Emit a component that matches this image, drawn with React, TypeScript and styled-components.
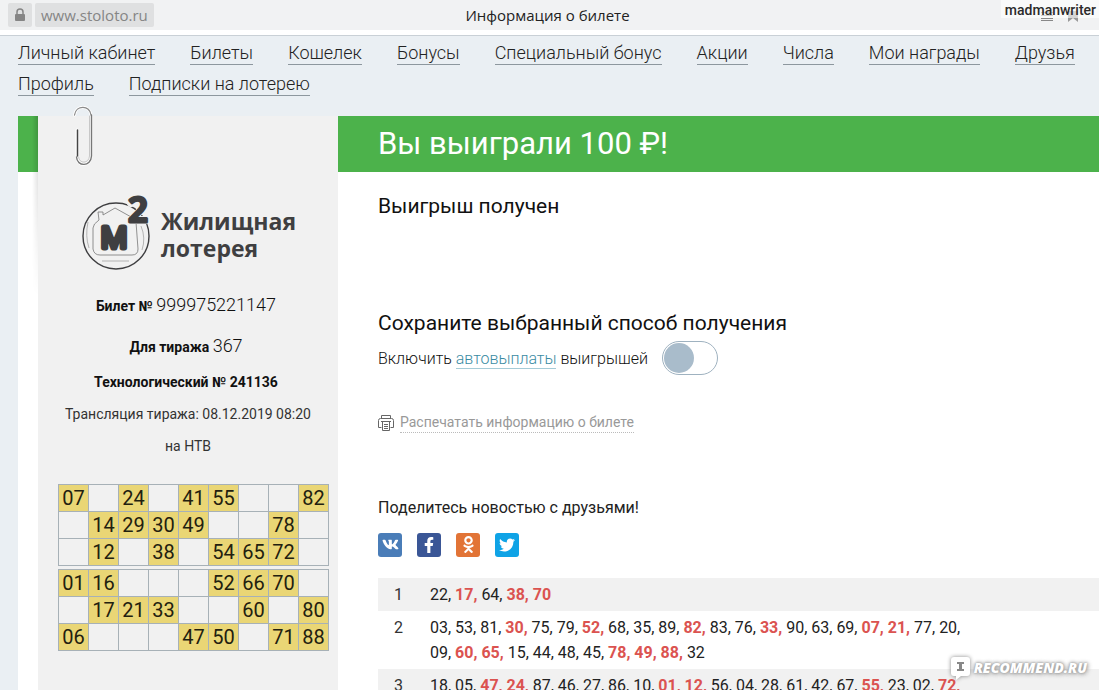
import React from "react";
import styled, { createGlobalStyle } from "styled-components";
import { FaVk, FaFacebookF, FaOdnoklassniki, FaTwitter } from "react-icons/fa";

const GlobalStyle = createGlobalStyle`
  *, *::before, *::after { box-sizing: border-box; }
  body { margin: 0; background: #eaeff3; color: #111; font-family: Roboto, "Liberation Sans", sans-serif; }
  h1, h2, p { margin: 0; }
`;

const Page = styled.div`
  position: relative;
  display: flex;
  flex-direction: column;
  height: 100vh;
  overflow: hidden;
`;

const BrowserBar = styled.header`
  display: grid;
  grid-template-columns: 1fr auto 1fr;
  flex: none;
  height: 36px;
  padding: 3px 12px 0 8px;
  background: linear-gradient(#f1f2f3 30px, #fff 30px);
  border-bottom: 1px solid #c9d0d6;
  font-family: "Open Sans", "Noto Sans", sans-serif;
  font-size: 15px;
  line-height: 24px;
`;

const Address = styled.div`
  display: flex;
  gap: 3px;
  height: 24px;
  color: #858585;
`;

const AddressPart = styled.span`
  display: flex;
  align-items: center;
  height: 24px;
  padding: 0 6px;
  border-radius: 2px;
  background: #dfe0e1;
`;

const PageTitle = styled.div`
  color: #222;
`;

const Nav = styled.nav`
  display: flex;
  flex-wrap: wrap;
  flex: none;
  gap: 7px 35px;
  height: 80px;
  align-content: flex-start;
  padding: 5px 18px 0;
`;

const NavLink = styled.a`
  height: 24px;
  border-bottom: 1px solid #8d979e;
  color: #222;
  font-size: 18px;
  font-weight: 300;
  line-height: 24px;
  text-decoration: none;
`;

const Main = styled.main`
  display: flex;
  flex: 1;
  margin-left: 18px;
  min-height: 0;
  background: linear-gradient(#4cb24b 56px, #fff 56px);
`;

const Fold = styled.div`
  flex: none;
  width: 20px;
  height: 180px;
  background: linear-gradient(to right, transparent 14px, rgba(0, 0, 0, 0.16));
  mask-image: linear-gradient(#000, transparent);
`;

const Ticket = styled.aside`
  position: relative;
  display: flex;
  flex-direction: column;
  align-items: center;
  flex: none;
  width: 300px;
  padding-top: 78px;
  background: #f1f1f1;
`;

const Clip = styled.svg`
  position: absolute;
  top: -10px;
  left: 34px;
`;

const Brand = styled.div`
  display: flex;
  gap: 10px;
  align-self: stretch;
  height: 91px;
  padding-left: 43px;
`;

const BrandName = styled.div`
  padding-top: 14px;
  color: #3f3f41;
  font-family: "Open Sans", "Noto Sans", sans-serif;
  font-size: 23px;
  font-weight: 700;
  line-height: 27px;
`;

const TicketLine = styled.p<{ $strong?: boolean; $height: number }>`
  padding-right: ${(p) => (p.$strong ? 4 : 0)}px;
  font-size: 14px;
  font-weight: ${(p) => (p.$strong ? 700 : 400)};
  line-height: ${(p) => p.$height}px;
  color: ${(p) => (p.$strong ? "#111" : "#333")};
`;

const Figure = styled.span`
  font-size: 18px;
  font-weight: 300;
`;

const Grids = styled.div`
  display: flex;
  flex-direction: column;
  align-self: flex-start;
  gap: 3px;
  margin-top: 22px;
  padding-left: 20px;
`;

const Grid = styled.table`
  border-collapse: collapse;
  table-layout: fixed;
  width: 271px;
`;

const Cell = styled.td<{ $filled: boolean }>`
  height: 27px;
  padding: 0;
  border: 1px solid #a7b1b7;
  background: ${(p) => (p.$filled ? "#ead675" : "transparent")};
  color: #22200f;
  font-size: 20px;
  line-height: 26px;
  text-align: center;
`;

const Content = styled.section`
  flex: 1;
  min-width: 0;
  padding-left: 40px;
`;

const Headline = styled.h1`
  height: 56px;
  color: #fff;
  font-size: 31px;
  font-weight: 400;
  line-height: 55px;
`;

const Subhead = styled.h2<{ $space: number }>`
  margin-top: ${(p) => p.$space}px;
  font-size: 21px;
  font-weight: 400;
  line-height: 28px;
`;

const AutoPay = styled.div`
  display: flex;
  align-items: center;
  gap: 14px;
  height: 34px;
  margin-top: 4px;
  font-size: 16px;
  font-weight: 300;
`;

const TextLink = styled.a`
  border-bottom: 1px solid #a5cbd7;
  color: #3a8ba3;
  text-decoration: none;
`;

const Toggle = styled.input`
  appearance: none;
  width: 56px;
  height: 34px;
  margin: 0;
  padding: 1px;
  border: 1px solid #9fb2c0;
  border-radius: 17px;
  background: #fff;
  &::before {
    content: "";
    display: block;
    width: 30px;
    height: 30px;
    border-radius: 50%;
    background: #a9bccb;
  }
  &:checked::before { margin-left: auto; }
`;

const PrintLink = styled.a`
  display: inline-flex;
  gap: 6px;
  align-items: center;
  margin-top: 37px;
  color: #999;
  font-size: 14px;
  line-height: 20px;
  text-decoration: none;
  span { border-bottom: 1px dotted #bbb; }
`;

const ShareText = styled.p`
  margin-top: 61px;
  font-size: 16px;
  line-height: 24px;
  color: #222;
`;

const Socials = styled.div`
  display: flex;
  gap: 15px;
  margin-top: 13px;
`;

const Social = styled.a<{ $color: string }>`
  display: flex;
  align-items: center;
  justify-content: center;
  width: 24px;
  height: 24px;
  border-radius: 3px;
  background: ${(p) => p.$color};
  color: #fff;
`;

const Draws = styled.table`
  width: 100%;
  margin-top: 21px;
  border-collapse: collapse;
  color: #222;
  font-size: 16px;
  line-height: 25px;
  tr:nth-child(odd) { background: #f1f1f1; }
  th, td { padding: 4px 0; vertical-align: top; }
  th { width: 52px; padding-left: 16px; font-weight: 400; text-align: left; color: #333; }
  td { padding-right: 120px; }
`;

const Hit = styled.b`
  color: #db5350;
  font-weight: 700;
`;

const UserTag = styled.div`
  position: absolute;
  top: 0;
  right: 0;
  height: 18px;
  padding: 0 3px 0 4px;
  background: rgba(255, 255, 255, 0.6);
  color: #2b2b2b;
  font-size: 14px;
  font-weight: 500;
  line-height: 20px;
`;

const BarIcons = styled.div`
  display: flex;
  justify-content: flex-end;
  padding: 8px 8px 0 0;
`;

const Watermark = styled.div`
  position: absolute;
  right: 12px;
  bottom: 8px;
  display: flex;
  align-items: center;
  gap: 2px;
  color: #fff;
  font-family: "Open Sans", sans-serif;
  font-size: 14px;
  font-style: italic;
  font-weight: 800;
  line-height: 28px;
  text-shadow: 0 0 2px #999, 0 0 4px #999, 1px 1px 5px #aaa;
  svg { filter: drop-shadow(0 0 2px #888); }
`;

const links = ["Личный кабинет", "Билеты", "Кошелек", "Бонусы", "Специальный бонус", "Акции", "Числа", "Мои награды", "Друзья", "Профиль", "Подписки на лотерею"];

const grids = [
  ["07,,24,,41,55,,,82", ",14,29,30,49,,,78,", ",12,,38,,54,65,72,"],
  ["01,16,,,,52,66,70,", ",17,21,33,,,60,,80", "06,,,,47,50,,71,88"],
];

const draws = [
  "22 17 64 38 70",
  "03 53 81 30 75 79 52 68 35 89 82 83 76 33 90 63 69 07 21 77 20 09 60 65 15 44 48 45 78 49 88 32",
  "18 05 47 24 87 46 27 86 10 01 12 56 04 28 61 42 67 55 23 02 72",
].map((row) => row.split(" "));

const ticketNumbers = new Set(grids.flat().join(",").split(","));

const socials = [
  { name: "ВКонтакте", color: "#4a7db8", icon: <FaVk size={17} /> },
  { name: "Facebook", color: "#3a5696", icon: <FaFacebookF size={16} /> },
  { name: "Одноклассники", color: "#e27436", icon: <FaOdnoklassniki size={17} /> },
  { name: "Twitter", color: "#0fa3e6", icon: <FaTwitter size={16} /> },
];

function PaperClip() {
  return (
    <Clip width="24" height="64" viewBox="0 0 24 64" fill="none" strokeLinecap="round">
      <path d="M2.500 9 C4 -1.500 18 -1 19 9 V50 C19 61 5 61 5 51 V24" stroke="#fff" strokeWidth="3" />
      <path d="M2.500 9 C4 -1.500 18 -1 19 9" stroke="#8c8c8c" strokeWidth="1.300" />
      <path d="M19.500 9 V50 C19 61 5 61 4.500 51" stroke="#777" strokeWidth="1.400" />
      <path d="M5.500 24 V50" stroke="#444" strokeWidth="1.500" />
      <path d="M17.500 10 V50 C17 58 7 58 6.500 51" stroke="#bbb" strokeWidth="0.800" />
    </Clip>
  );
}

function BrandMark() {
  return (
    <svg width="70" height="80" viewBox="0 0 70 80" fill="none">
      <circle cx="35" cy="42" r="33" stroke="#3f3f41" strokeWidth="1.400" />
      <path d="M18 26 L17 18 H22 V21 L34 14 L52 24 L55 28 L57 55 Q57 61 51 61 H19 Q13 61 12 55 V34 Q12 30 18 26 Z" stroke="#777" strokeWidth="0.800" />
      <path d="M7 28 Q4 42 8 54 M60 32 Q65 44 61 56 M21 67 H48" stroke="#999" strokeWidth="0.700" />
      <path d="M50 9 Q56 2 61 8 Q63 14 51 26 H64" stroke="#f1f1f1" strokeWidth="8" strokeLinecap="round" strokeLinejoin="round" />
      <g fill="#3f3f41" stroke="#3f3f41" strokeLinejoin="round" fontFamily="Open Sans, sans-serif">
        <text x="33" y="54" fontSize="30" fontWeight="400" strokeWidth="5" textAnchor="middle">М</text>
        <text x="57" y="28" fontSize="35" fontWeight="600" strokeWidth="3" textAnchor="middle">2</text>
      </g>
    </svg>
  );
}

function Printer() {
  return (
    <svg width="16" height="16" viewBox="0 0 16 16" fill="none" stroke="#666">
      <path d="M3.500 3.500 V0.500 H12.500 V3.500 M3.500 12.500 H0.500 V5.500 Q0.500 3.500 2.500 3.500 H13.500 Q15.500 3.500 15.500 5.500 V12.500 H12.500" />
      <path d="M4.500 6.500 H11.500 V15.500 H4.500 Z M6 9.500 H10 M6 11.500 H10 M6 13.500 H10 M3 6.500 H13" />
    </svg>
  );
}

export default function App() {
  return (
    <Page>
      <GlobalStyle />
      <BrowserBar>
        <Address>
          <AddressPart>
            <svg width="12" height="14" viewBox="0 0 12 14">
              <path d="M3 6 V4 Q3 1 6 1 Q9 1 9 4 V6" fill="none" stroke="#858585" strokeWidth="1.500" />
              <rect x="1" y="6" width="10" height="7" rx="1" fill="#858585" />
            </svg>
          </AddressPart>
          <AddressPart>www.stoloto.ru</AddressPart>
        </Address>
        <PageTitle>Информация о билете</PageTitle>
        <BarIcons>
          <svg width="38" height="12" viewBox="0 0 38 12">
            <path d="M0 1.500 H12 M0 4.500 H12 M0 7.500 H12 M0 9.500 H12" stroke="#888" />
            <path d="M27 0 H37 V11 L32 7 L27 11 Z" fill="#999" />
          </svg>
        </BarIcons>
      </BrowserBar>
      <Nav>
        {links.map((l) => <NavLink key={l} href="#">{l}</NavLink>)}
      </Nav>
      <Main>
        <Fold />
        <Ticket>
          <PaperClip />
          <Brand>
            <BrandMark />
            <BrandName>Жилищная<br />лотерея</BrandName>
          </Brand>
          <TicketLine $strong $height={40}>Билет № <Figure>999975221147</Figure></TicketLine>
          <TicketLine $strong $height={40}>Для тиража <Figure>367</Figure></TicketLine>
          <TicketLine $strong $height={31}>Технологический № 241136</TicketLine>
          <TicketLine $height={32}>Трансляция тиража: 08.12.2019 08:20</TicketLine>
          <TicketLine $height={32}>на НТВ</TicketLine>
          <Grids>
            {grids.map((grid, g) => (
              <Grid key={g}>
                <tbody>
                  {grid.map((row, r) => (
                    <tr key={r}>
                      {row.split(",").map((n, c) => <Cell key={c} $filled={n !== ""}>{n}</Cell>)}
                    </tr>
                  ))}
                </tbody>
              </Grid>
            ))}
          </Grids>
        </Ticket>
        <Content>
          <Headline>Вы выиграли 100 ₽!</Headline>
          <Subhead $space={20}>Выигрыш получен</Subhead>
          <Subhead $space={89}>Сохраните выбранный способ получения</Subhead>
          <AutoPay>
            <label htmlFor="autopay">Включить <TextLink href="#">автовыплаты</TextLink> выигрышей</label>
            <Toggle id="autopay" type="checkbox" role="switch" />
          </AutoPay>
          <PrintLink href="#"><Printer /><span>Распечатать информацию о билете</span></PrintLink>
          <ShareText>Поделитесь новостью с друзьями!</ShareText>
          <Socials>
            {socials.map((s) => <Social key={s.name} href="#" aria-label={s.name} $color={s.color}>{s.icon}</Social>)}
          </Socials>
          <Draws>
            <tbody>
              {draws.map((row, i) => (
                <tr key={i}>
                  <th scope="row">{i + 1}</th>
                  <td>
                    {row.map((n, j) => {
                      const text = j < row.length - 1 || i === 2 ? `${n},` : n;
                      return <React.Fragment key={n}>{ticketNumbers.has(n) ? <Hit>{text}</Hit> : text} </React.Fragment>;
                    })}
                  </td>
                </tr>
              ))}
            </tbody>
          </Draws>
        </Content>
      </Main>
      <UserTag>madmanwriter</UserTag>
      <Watermark>
        <svg width="22" height="26" viewBox="0 0 22 26">
          <path d="M4 2 H17 Q20 2 20 5 V18 Q20 21 17 21 H11 L6 25 V21 H4 Q1 21 1 18 V5 Q1 2 4 2 Z" fill="#fff" />
          <path d="M7 7 H14 V9 H12 V14 H14 V16 H7 V14 H9 V9 H7 Z" fill="#888" />
        </svg>
        RECOMMEND.RU
      </Watermark>
    </Page>
  );
}
